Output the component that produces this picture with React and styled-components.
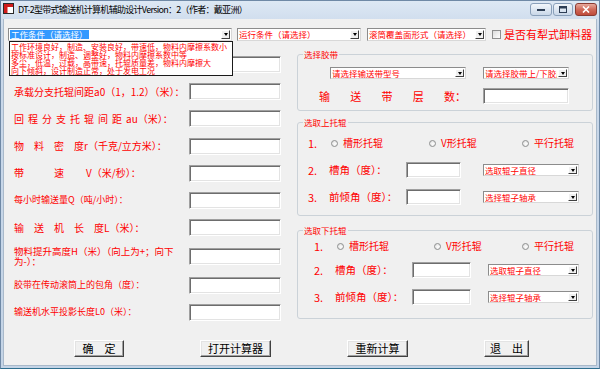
import React from 'react';
import styled, { createGlobalStyle } from 'styled-components';

const CJK = `"Noto Sans CJK SC", "Noto Sans", sans-serif`;
const RED = '#ff0000';

const Global = createGlobalStyle`
  html, body { margin: 0; padding: 0; background: #f0f0f0; }
  #root { width: 600px; height: 369px; overflow: hidden; }
  * { box-sizing: border-box; }
  body { font-family: ${CJK}; }
`;

const Window = styled.div`
  width: 600px;
  height: 369px;
  display: flex;
  flex-direction: column;
  padding: 0 2px 2px 2px;
  background: linear-gradient(#dde8f4, #c9d8ea 30px, #c4d4e6);
  border: 1px solid #6f89a6;
  border-bottom-color: #2f6f8f;
`;

const TitleBar = styled.div`
  height: 18px;
  display: flex;
  align-items: flex-start;
  flex-shrink: 0;
`;

const AppIcon = styled.svg`
  margin-top: 2px;
  flex-shrink: 0;
`;

const TitleText = styled.span`
  margin-left: 4px;
  margin-top: 3px;
  font: 9px/11px ${CJK};
  letter-spacing: -0.7px;
  color: #000;
  white-space: nowrap;
`;

const Caption = styled.div`
  display: flex;
  margin-left: auto;
  margin-top: 2px;
`;

const CapBtn = styled.div`
  width: ${p => p.$w}px;
  height: 13px;
  margin-left: ${p => p.$ml}px;
  border: 1px solid ${p => (p.$close ? '#8a3b32' : '#8aa0ba')};
  border-radius: 3px;
  background: ${p =>
    p.$close
      ? 'linear-gradient(#e8a99c, #d06a5a 50%, #bf4a3a)'
      : 'linear-gradient(#f3f7fb, #dde7f2 50%, #c9d7e8)'};
  display: flex;
  align-items: center;
  justify-content: center;
`;

const Client = styled.div`
  flex: 1;
  position: relative;
  background: #f0f0f0;
  display: flex;
  flex-direction: column;
  border: 1px solid #a9b9ca;
  border-top: none;
`;

const TopRow = styled.div`
  margin-top: 9px;
  padding-left: 4px;
  display: flex;
  align-items: center;
  height: 13px;
`;

const Combo = styled.div`
  display: flex;
  align-items: stretch;
  width: ${p => p.$w}px;
  height: ${p => p.$h || 13}px;
  margin-left: ${p => p.$ml || 0}px;
  background: #fff;
  border: 1px solid #8c8c8c;
  border-right-color: #d8d8d8;
  border-bottom-color: #d8d8d8;
  flex-shrink: 0;
`;

const ComboText = styled.span`
  flex: 1;
  min-width: 0;
  overflow: hidden;
  white-space: nowrap;
  font: 8.5px/${p => (p.$h || 13) - 2}px ${CJK};
  color: ${RED};
  padding-left: 1px;
`;

const SelText = styled.span`
  background: #3399ff;
  color: #fff;
  display: inline-block;
  line-height: 9px;
  padding: 0 1px;
  margin-top: 1px;
`;

const ArrowBtn = styled.span`
  width: 9px;
  margin: 1px;
  background: #f0f0f0;
  border: 1px solid;
  border-color: #fff #404040 #404040 #fff;
  display: flex;
  align-items: center;
  justify-content: center;
  &::after {
    content: '';
    border-left: 2.5px solid transparent;
    border-right: 2.5px solid transparent;
    border-top: 3px solid #000;
  }
`;

const CheckBox = styled.span`
  width: 9px;
  height: 9px;
  margin-left: 6px;
  border: 1px solid #8e8f8f;
  background: linear-gradient(135deg, #dcdcdc, #fff);
  flex-shrink: 0;
`;

const CheckLabel = styled.span`
  margin-left: 3px;
  font: 11px/13px ${CJK};
  color: ${RED};
  white-space: nowrap;
`;

const DropList = styled.div`
  position: absolute;
  left: 5px;
  top: 22px;
  width: 224px;
  height: 35px;
  background: #fff;
  border: 1px solid #1a1a1a;
  padding: 1px 0 0 1px;
  overflow: hidden;
  z-index: 2;
`;

const DropItem = styled.div`
  font: 8px/8px ${CJK};
  color: ${RED};
  white-space: nowrap;
`;

const Main = styled.div`
  display: flex;
  align-items: flex-start;
`;

const LeftCol = styled.div`
  width: 293px;
  padding: 15px 0 0 10px;
  display: grid;
  grid-template-columns: 175px 92px;
  row-gap: 10.2px;
  align-items: center;
`;

const FieldLabel = styled.div`
  font: ${p => p.$fs || 10}px/10px ${CJK};
  color: ${RED};
  max-width: ${p => p.$w || 175}px;
  white-space: ${p => (p.$wrap ? 'normal' : 'nowrap')};
`;

const Sp = styled.span`
  letter-spacing: ${p => p.$ls}px;
`;

const TextBox = styled.input`
  appearance: none;
  display: block;
  margin: 0;
  padding: 0;
  width: ${p => p.$w}px;
  height: ${p => p.$h}px;
  background: #fff;
  border: 1px solid;
  border-color: #a0a0a0 #fff #fff #a0a0a0;
  box-shadow: inset 1px 1px 0 #6d6d6d, inset -1px -1px 0 #e3e3e3;
  outline: none;
`;

const RightCol = styled.div`
  width: 296px;
  padding-top: 8px;
  display: flex;
  flex-direction: column;
`;

const Group = styled.fieldset`
  margin: ${p => p.$mt || 0}px 0 0 0;
  padding: 0;
  width: 296px;
  min-width: 0;
  border: 1px solid #cbd2d8;
  border-radius: 3px;
`;

const Legend = styled.legend`
  margin-left: 5px;
  padding: 0 1px;
  font: 8.5px/10px ${CJK};
  color: ${RED};
`;

const GroupInner = styled.div`
  padding: ${p => p.$pt}px 0 ${p => p.$pb}px ${p => p.$pl}px;
  display: flex;
  flex-direction: column;
`;

const BeltGrid = styled.div`
  display: grid;
  grid-template-columns: 147px 86px;
  column-gap: 17px;
  row-gap: 9px;
  align-items: center;
`;

const SpreadLabel = styled.div`
  display: flex;
  justify-content: space-between;
  font: 11px/12px ${CJK};
  color: ${RED};
`;

const EndCell = styled.div`
  justify-self: end;
`;

const RadioRow = styled.div`
  display: flex;
  align-items: center;
  height: 12px;
`;

const Num = styled.span`
  width: ${p => p.$w || 21}px;
  flex-shrink: 0;
  font: 11px/12px ${CJK};
  color: ${RED};
`;

const RadioItem = styled.label`
  display: flex;
  align-items: center;
  width: ${p => (p.$w ? `${p.$w}px` : 'auto')};
  flex-shrink: 0;
`;

const RadioDot = styled.span`
  width: 7px;
  height: 7px;
  border-radius: 50%;
  border: 1px solid #8e8f8f;
  background: radial-gradient(circle at 60% 60%, #fff, #dadada);
  margin-right: 5px;
  flex-shrink: 0;
`;

const RadioText = styled.span`
  font: 10px/12px ${CJK};
  color: ${RED};
  white-space: nowrap;
`;

const FieldRow = styled.div`
  display: grid;
  grid-template-columns: ${p => p.$cols};
  align-items: center;
  margin-top: ${p => p.$mt}px;
`;

const RowLabel = styled.span`
  font: 10.5px/12px ${CJK};
  color: ${RED};
  white-space: nowrap;
`;

const Footer = styled.div`
  display: flex;
  gap: 76px;
  padding-left: 70px;
  margin-top: 19px;
`;

const Button = styled.button`
  width: ${p => p.$w}px;
  height: 17px;
  padding: 0;
  margin: 0;
  font: 11px/13px ${CJK};
  color: #000;
  background: #f0f0f0;
  border: 1px solid;
  border-color: #fff #404040 #404040 #fff;
  box-shadow: inset -1px -1px 0 #a0a0a0, inset 1px 1px 0 #e3e3e3;
  white-space: nowrap;
`;

function ComboBox({ w, h, ml, children, selected }) {
  return (
    <Combo $w={w} $h={h} $ml={ml}>
      <ComboText $h={h}>{selected ? <SelText>{children}</SelText> : children}</ComboText>
      <ArrowBtn />
    </Combo>
  );
}

const leftRows = [
  { label: '' },
  { label: '承载分支托辊间距a0（1，1.2）（米）：', fs: 10 },
  { label: <><Sp $ls={4}>回程分支托辊间距</Sp>au（米）：</>, fs: 10 },
  { label: <><Sp $ls={10}>物料密</Sp>度r（千克/立方米）：</>, fs: 10 },
  { label: <><Sp $ls={30}>带</Sp><Sp $ls={22}>速</Sp>V（米/秒）：</>, fs: 10 },
  { label: '每小时输送量Q（吨/小时）：', fs: 9 },
  { label: <><Sp $ls={10}>输送机长</Sp>度L（米）：</>, fs: 10 },
  { label: '物料提升高度H（米）（向上为+；向下为-）：', fs: 9.5, w: 168, wrap: true },
  { label: '胶带在传动滚筒上的包角（度）：', fs: 9 },
  { label: '输送机水平投影长度L0（米）：', fs: 9 },
];

function IdlerGroup({ title, mt, pt, pb, pl, r1, r2, cols, inW, comboW, gaps }) {
  return (
    <Group $mt={mt}>
      <Legend>{title}</Legend>
      <GroupInner $pt={pt} $pb={pb} $pl={pl}>
        <RadioRow>
          <Num $w={23}>1.</Num>
          <RadioItem $w={r1}><RadioDot /><RadioText>槽形托辊</RadioText></RadioItem>
          <RadioItem $w={r2}><RadioDot /><RadioText>V形托辊</RadioText></RadioItem>
          <RadioItem><RadioDot /><RadioText>平行托辊</RadioText></RadioItem>
        </RadioRow>
        <FieldRow $cols={cols} $mt={gaps[0]}>
          <Num>2.</Num>
          <RowLabel>槽角（度）：</RowLabel>
          <TextBox $w={inW} $h={16} readOnly />
          <EndCell><ComboBox w={comboW} h={12}>选取辊子直径</ComboBox></EndCell>
        </FieldRow>
        <FieldRow $cols={cols} $mt={gaps[1]}>
          <Num>3.</Num>
          <RowLabel>前倾角（度）：</RowLabel>
          <TextBox $w={inW} $h={16} readOnly />
          <EndCell><ComboBox w={comboW} h={12}>选择辊子轴承</ComboBox></EndCell>
        </FieldRow>
      </GroupInner>
    </Group>
  );
}

export default function App() {
  return (
    <>
      <Global />
      <Window>
        <TitleBar>
          <AppIcon width="11" height="11" viewBox="0 0 11 11">
            <rect x="0.5" y="0.5" width="10" height="10" fill="#fff" stroke="#2a2a2a" />
            <path d="M1 1h9v3H4.5v6H1z" fill="#d01c1c" />
          </AppIcon>
          <TitleText>DT-2型带式输送机计算机辅助设计Version：2（作者：戴亚洲）</TitleText>
          <Caption>
            <CapBtn $w={22} $ml={0}>
              <svg width="8" height="4" viewBox="0 0 8 4"><rect x="0" y="1" width="8" height="2" fill="#2d3e55" /></svg>
            </CapBtn>
            <CapBtn $w={20} $ml={1}>
              <svg width="8" height="7" viewBox="0 0 8 7"><rect x="0.5" y="0.5" width="7" height="6" fill="none" stroke="#2d3e55" /><rect x="1" y="1" width="6" height="1.5" fill="#2d3e55" /></svg>
            </CapBtn>
            <CapBtn $w={22} $ml={2} $close>
              <svg width="8" height="7" viewBox="0 0 8 7"><path d="M1 0.5l6 6M7 0.5l-6 6" stroke="#fff" strokeWidth="1.6" /></svg>
            </CapBtn>
          </Caption>
        </TitleBar>
        <Client>
          <TopRow>
            <ComboBox w={224} selected>工作条件（请选择）</ComboBox>
            <ComboBox w={124} ml={5}>运行条件（请选择）</ComboBox>
            <ComboBox w={119} ml={6}>滚筒覆盖面形式（请选择）</ComboBox>
            <CheckBox />
            <CheckLabel>是否有犁式卸料器</CheckLabel>
          </TopRow>
          <DropList>
            <DropItem>工作环境良好，制造、安装良好，带速低，物料内摩擦系数小</DropItem>
            <DropItem>按标准设计，制造、调整好，物料内摩擦系数中等</DropItem>
            <DropItem>多尘，低温，过载，高带速，托辊质量差，物料内摩擦大</DropItem>
            <DropItem>向下倾斜，设计制造正常，处于发电工况</DropItem>
          </DropList>
          <Main>
            <LeftCol>
              {leftRows.map((r, i) => (
                <React.Fragment key={i}>
                  <FieldLabel $fs={r.fs} $w={r.w} $wrap={r.wrap}>{r.label}</FieldLabel>
                  <TextBox $w={92} $h={17} readOnly />
                </React.Fragment>
              ))}
            </LeftCol>
            <RightCol>
              <Group>
                <Legend>选择胶带</Legend>
                <GroupInner $pt={8} $pb={6} $pl={21}>
                  <BeltGrid>
                    <EndCell><ComboBox w={136} h={12}>请选择输送带型号</ComboBox></EndCell>
                    <ComboBox w={86} h={12}>请选择胶带上/下胶厚</ComboBox>
                    <SpreadLabel>
                      <span>输</span><span>送</span><span>带</span><span>层</span><span>数：</span>
                    </SpreadLabel>
                    <TextBox $w={86} $h={16} readOnly />
                  </BeltGrid>
                </GroupInner>
              </Group>
              <IdlerGroup
                title="选取上托辊"
                mt={6}
                pt={10}
                pb={10}
                pl={10}
                r1={98}
                r2={93}
                cols="21px 77px 55px 118px"
                inW={55}
                comboW={96}
                gaps={[13, 11]}
              />
              <IdlerGroup
                title="选取下托辊"
                mt={9}
                pt={5}
                pb={13}
                pl={16}
                r1={97}
                r2={88}
                cols="21px 77px 59px 108px"
                inW={59}
                comboW={91}
                gaps={[10, 11]}
              />
            </RightCol>
          </Main>
          <Footer>
            <Button $w={50}>确　定</Button>
            <Button $w={71}>打开计算器</Button>
            <Button $w={61}>重新计算</Button>
            <Button $w={45}>退　出</Button>
          </Footer>
        </Client>
      </Window>
    </>
  );
}
